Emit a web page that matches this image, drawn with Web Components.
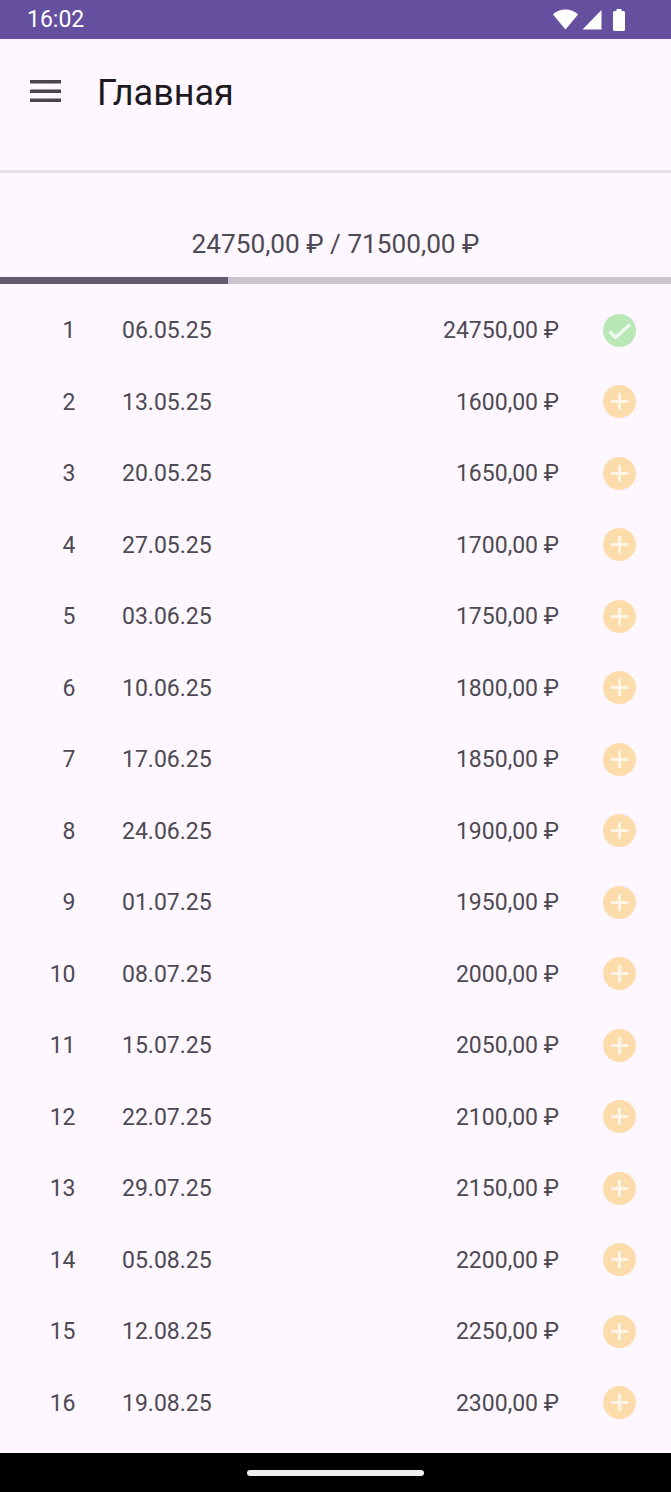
<!DOCTYPE html>
<html lang="ru">
<head>
<meta charset="utf-8">
<title>Главная</title>
<style>
  html, body { margin: 0; height: 100%; background: #fef7ff; }
  body { font-family: Roboto, "Noto Sans", sans-serif; overflow: hidden; }
  #app { display: flex; flex-direction: column; height: 1492px; }
</style>
</head>
<body>
<div id="app">
  <status-bar time="16:02"></status-bar>
  <app-bar title="Главная"></app-bar>
  <savings-view></savings-view>
  <nav-bar></nav-bar>
</div>

<script>
class StatusBar extends HTMLElement {
  constructor() {
    super();
    this.attachShadow({ mode: 'open' });
  }

  connectedCallback() {
    this.shadowRoot.innerHTML = `
      <style>
        :host {
          display: flex;
          align-items: center;
          justify-content: space-between;
          flex: none;
          height: 39px;
          padding: 0 46px 0 27px;
          background: #65509f;
          color: #fff;
          font-size: 23px;
        }
        .icons { display: flex; align-items: center; gap: 4px; }
        svg { display: block; fill: #fff; }
      </style>
      <span>${this.getAttribute('time')}</span>
      <div class="icons">
        <svg width="25" height="21" viewBox="0 0 25 21"><path d="M0 5.500C3.400 2.300 7.800 .5 12.500 .5S21.600 2.300 25 5.500L12.500 20.500Z"/></svg>
        <svg width="20" height="21" viewBox="0 0 20 21"><path d="M19.500 1V20.500H.5Z"/></svg>
        <svg width="12" height="22" viewBox="0 0 12 22" style="margin-left:7px"><path d="M3.500 0H8.500V2H10.500A1.500 1.500 0 0 1 12 3.500V20.500A1.500 1.500 0 0 1 10.500 22H1.500A1.500 1.500 0 0 1 0 20.500V3.500A1.500 1.500 0 0 1 1.500 2H3.500Z"/></svg>
      </div>
    `;
  }
}

class AppBar extends HTMLElement {
  constructor() {
    super();
    this.attachShadow({ mode: 'open' });
  }

  connectedCallback() {
    this.shadowRoot.innerHTML = `
      <style>
        :host {
          display: flex;
          align-items: flex-start;
          flex: none;
          height: 134px;
          box-sizing: border-box;
          border-bottom: 3.500px solid #e5e2e5;
          background: #fef7ff;
        }
        .menu { display: block; margin: 41px 0 0 30px; }
        h1 {
          margin: 30px 0 0 36px;
          font-size: 36px;
          line-height: 48px;
          font-weight: 400;
          color: #1d1b20;
        }
      </style>
      <svg class="menu" width="31" height="23" viewBox="0 0 31 23" fill="#49454f">
        <rect y="0" width="31" height="3.500"/>
        <rect y="9.500" width="31" height="3.500"/>
        <rect y="18.500" width="31" height="3.500"/>
      </svg>
      <h1>${this.getAttribute('title')}</h1>
    `;
  }
}

class ProgressLine extends HTMLElement {
  constructor() {
    super();
    this.attachShadow({ mode: 'open' });
  }

  connectedCallback() {
    const value = this.getAttribute('value');
    this.shadowRoot.innerHTML = `
      <style>
        :host { display: block; height: 7px; background: #cac4d0; }
        div { height: 100%; background: #625b71; }
      </style>
      <div style="width:${value}%"></div>
    `;
  }
}

class PaymentRow extends HTMLElement {
  constructor() {
    super();
    this.attachShadow({ mode: 'open' });
  }

  connectedCallback() {
    const done = this.hasAttribute('done');
    const icon = done
      ? `<path d="M6.500 17.500L12.500 23.500L27 10.500" fill="none" stroke="#fff" stroke-opacity=".8" stroke-width="3.400"/>`
      : `<path d="M16.500 8V25M8 16.500H25" fill="none" stroke="#fff" stroke-opacity=".7" stroke-width="3"/>`;
    this.shadowRoot.innerHTML = `
      <style>
        :host {
          display: grid;
          grid-template-columns: 75.500px 46.500px 1fr auto 44px 33px;
          align-items: center;
          height: 71.5px;
          padding-right: 35px;
          color: #4d4a53;
          font-size: 23px;
          white-space: nowrap;
        }
        .num { text-align: right; }
        .date { grid-column: 3; }
        .sum { grid-column: 4; }
        svg { grid-column: 6; display: block; margin-top: -1px; }
      </style>
      <span class="num">${this.getAttribute('num')}</span>
      <span class="date">${this.getAttribute('date')}</span>
      <span class="sum">${this.getAttribute('sum')}</span>
      <svg width="33" height="33" viewBox="0 0 33 33">
        <circle cx="16.500" cy="16.500" r="16.500" fill="${done ? '#b9e7b6' : '#fddcab'}"/>
        ${icon}
      </svg>
    `;
  }
}

class SavingsView extends HTMLElement {
  constructor() {
    super();
    this.attachShadow({ mode: 'open' });
  }

  connectedCallback() {
    const payments = [
      ['06.05.25', '24750,00 ₽'],
      ['13.05.25', '1600,00 ₽'],
      ['20.05.25', '1650,00 ₽'],
      ['27.05.25', '1700,00 ₽'],
      ['03.06.25', '1750,00 ₽'],
      ['10.06.25', '1800,00 ₽'],
      ['17.06.25', '1850,00 ₽'],
      ['24.06.25', '1900,00 ₽'],
      ['01.07.25', '1950,00 ₽'],
      ['08.07.25', '2000,00 ₽'],
      ['15.07.25', '2050,00 ₽'],
      ['22.07.25', '2100,00 ₽'],
      ['29.07.25', '2150,00 ₽'],
      ['05.08.25', '2200,00 ₽'],
      ['12.08.25', '2250,00 ₽'],
      ['19.08.25', '2300,00 ₽']
    ];
    this.shadowRoot.innerHTML = `
      <style>
        :host {
          display: flex;
          flex-direction: column;
          flex: 1;
          min-height: 0;
          overflow: hidden;
          background: #fef7ff;
        }
        .total {
          padding: 55px 0 16px;
          height: 33px;
          line-height: 33px;
          text-align: center;
          color: #4d4a53;
          font-size: 26.200px;
        }
        .rows { padding-top: 11px; }
      </style>
      <div class="total">24750,00 ₽ / 71500,00 ₽</div>
      <progress-line value="34"></progress-line>
      <div class="rows">
        ${payments.map((p, i) => `
          <payment-row num="${i + 1}" date="${p[0]}" sum="${p[1]}" ${i === 0 ? 'done' : ''}></payment-row>
        `).join('')}
      </div>
    `;
  }
}

class NavBar extends HTMLElement {
  constructor() {
    super();
    this.attachShadow({ mode: 'open' });
  }

  connectedCallback() {
    this.shadowRoot.innerHTML = `
      <style>
        :host {
          display: flex;
          align-items: center;
          justify-content: center;
          flex: none;
          height: 39px;
          background: #000;
        }
        div { width: 177px; height: 6px; border-radius: 3px; background: #eee; }
      </style>
      <div></div>
    `;
  }
}

customElements.define('status-bar', StatusBar);
customElements.define('app-bar', AppBar);
customElements.define('progress-line', ProgressLine);
customElements.define('payment-row', PaymentRow);
customElements.define('savings-view', SavingsView);
customElements.define('nav-bar', NavBar);
</script>
</body>
</html>
